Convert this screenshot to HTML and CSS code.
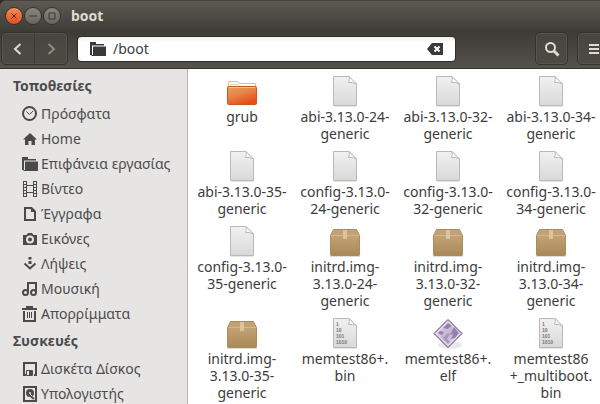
FILE: index.html
```html
<!DOCTYPE html>
<html lang="el">
<head>
    <meta charset="UTF-8">
    <meta name="viewport" content="width=device-width, initial-scale=1.0">
    <title>boot</title>
    <link rel="stylesheet" href="styles.css">
</head>
<body>

<!-- shared file icons -->
<svg class="defs" aria-hidden="true">
    <defs>
        <linearGradient id="paper" x1="0" y1="0" x2="0" y2="1">
            <stop offset="0" stop-color="#f1f1f1"/>
            <stop offset="1" stop-color="#d9d9d9"/>
        </linearGradient>
        <linearGradient id="orange" x1="0" y1="0" x2="0.5" y2="1">
            <stop offset="0" stop-color="#dca668"/>
            <stop offset="0.5" stop-color="#e98246"/>
            <stop offset="1" stop-color="#e2501c"/>
        </linearGradient>
        <linearGradient id="carton" x1="0" y1="0" x2="0" y2="1">
            <stop offset="0" stop-color="#cbaa7d"/>
            <stop offset="1" stop-color="#a98859"/>
        </linearGradient>
        <linearGradient id="gem" x1="0" y1="0" x2="1" y2="1">
            <stop offset="0" stop-color="#e6dfee"/>
            <stop offset="0.5" stop-color="#c5b8d3"/>
            <stop offset="1" stop-color="#ded9e4"/>
        </linearGradient>
    </defs>
    <symbol id="file" viewBox="0 0 32 32">
        <path d="M4.500.5h15.500l7.500 7.500v21.500h-23z" fill="url(#paper)" stroke="#b9b9b9"/>
        <path d="M5 30.500h22.500" stroke="#e4e4e4"/>
        <path d="M20 .5q1 3-.5 6 4-.8 8 1.500z" fill="#fff" stroke="#b9b9b9"/>
    </symbol>
    <symbol id="folder" viewBox="0 0 32 32">
        <path d="M2.500 12V5.500h9l1.500 2h16.500V12z" fill="#fafafa" stroke="#c4c4c4"/>
        <path d="M4 8.500h8" stroke="#e2d6c8"/>
        <rect x="1.500" y="10.500" width="29" height="18" rx="1" fill="url(#orange)" stroke="#c9581f"/>
        <path d="M3 11.500h26" stroke="#f3c091"/>
    </symbol>
    <symbol id="package" viewBox="0 0 32 32">
        <path d="M1 30h30" stroke="#ddd" stroke-width="2"/>
        <path d="M4.500 3.500h23l3 6v19q0 1-1 1h-27q-1 0-1-1v-19z" fill="url(#carton)" stroke="#ab8a5c"/>
        <path d="M5 4h22l2.500 5.500h-27z" fill="#c2a176"/>
        <path d="M2 9.500h28" stroke="#d3b78c"/>
        <path d="M14 4h4v9h-4z" fill="#dac49f"/>
    </symbol>
    <symbol id="elf" viewBox="0 0 32 32">
        <ellipse cx="18" cy="27" rx="12" ry="4" fill="#e9e9e9"/>
        <path d="M16 1.500L30 15.500 16 29.500 2 15.500z" fill="url(#gem)" stroke="#5d3f70"/>
        <path d="M16 3.500L28 15.500 16 27.500 4 15.500z" fill="none" stroke="#f2eff5"/>
        <path d="M16 5l4 3-5 3-4-1zM8 13l4 1-2 3-4-2zM22 9l5 6-4 5-4 1 2-5-3 1z" fill="#9680ae"/>
        <path d="M11 20l5-5 2 1-3 5 3 3-2 2z" fill="#a997bd"/>
    </symbol>
    <symbol id="folder-small" viewBox="0 0 16 16">
        <path d="M0 1h6v2h8v1.500H2V14H0z"/>
        <path d="M3 5.500h13V15H1.500V14H3z"/>
    </symbol>
</svg>

<div class="window">
    <header class="chrome">
        <div class="titlebar">
            <button class="win-btn close" aria-label="Κλείσιμο"><svg viewBox="0 0 16 16"><path d="M5.500 5.500l5 5m0-5l-5 5"/></svg></button>
            <button class="win-btn" aria-label="Ελαχιστοποίηση"><svg viewBox="0 0 16 16"><path d="M4 8h8"/></svg></button>
            <button class="win-btn" aria-label="Μεγιστοποίηση"><svg viewBox="0 0 16 16"><path d="M5 5h6v6H5z"/></svg></button>
            <h1>boot</h1>
        </div>
        <div class="toolbar">
            <div class="nav">
                <button aria-label="Πίσω"><svg viewBox="0 0 16 16"><path d="M10.500 3L5 8l5.500 5"/></svg></button>
                <button class="off" aria-label="Εμπρός"><svg viewBox="0 0 16 16"><path d="M5.500 3L11 8l-5.500 5"/></svg></button>
            </div>
            <div class="path">
                <label for="location" aria-label="Τοποθεσία"><svg class="icon" viewBox="0 0 16 16"><use href="#folder-small"/></svg></label>
                <input type="text" id="location" value="/boot">
                <button aria-label="Καθαρισμός">
                    <svg class="icon" viewBox="0 0 16 16"><path d="M5 2h11v12H5L0 8z"/><path d="M7.500 5.500l5 5m0-5l-5 5" stroke="#fff" stroke-width="2"/></svg>
                </button>
            </div>
            <button class="tool" aria-label="Αναζήτηση"><svg viewBox="0 0 16 16"><circle cx="6.500" cy="6.500" r="4.500"/><path d="M10 10l4.500 4.500" stroke-width="3"/></svg></button>
            <button class="tool menu" aria-label="Μενού"><svg viewBox="0 0 16 16"><path d="M3 4h10M3 8h10M3 12h10"/></svg></button>
        </div>
    </header>

    <div class="content">
        <nav class="sidebar">
            <h2>Τοποθεσίες</h2>
            <ul>
                <li><a href="#"><svg class="icon" viewBox="0 0 16 16"><circle cx="7.500" cy="7.500" r="6.500" class="line"/><path d="M4.500 5.500l3 3L11 5" class="line thin"/></svg>Πρόσφατα</a></li>
                <li><a href="#"><svg class="icon" viewBox="0 0 16 16"><path d="M8 2l7 6.500h-2V14H9.500v-4h-3v4H3V8.500H1z"/></svg>Home</a></li>
                <li><a href="#"><svg class="icon" viewBox="0 0 16 16"><use href="#folder-small"/></svg>Επιφάνεια εργασίας</a></li>
                <li><a href="#"><svg class="icon" viewBox="0 0 16 16"><path d="M1.500 0v16M4.500 0v16M11.500 0v16M14.500 0v16M5 4.500h6M5 11.500h6" class="line thin"/><path d="M3 0v16M13 0v16" class="line holes"/></svg>Βίντεο</a></li>
                <li><a href="#"><svg class="icon" viewBox="0 0 16 16"><path d="M3 2h6.500L13 5.500V14H3z" class="line"/><path d="M9 2v4h4z"/></svg>Έγγραφα</a></li>
                <li><a href="#"><svg class="icon" viewBox="0 0 16 16"><path d="M1 4h3.500L6 2h4l1.500 2H15v10H1z"/><circle cx="8" cy="8.500" r="3" fill="none" stroke="#e6e5e4" stroke-width="2"/></svg>Εικόνες</a></li>
                <li><a href="#"><svg class="icon" viewBox="0 0 16 16"><path d="M6.500 1h3v2.500h-3zM6.500 5h3v3h-3z"/><path d="M2.500 7.500L8 12.500l5.500-5" class="line"/></svg>Λήψεις</a></li>
                <li><a href="#"><svg class="icon" viewBox="0 0 16 16"><circle cx="3.500" cy="11.500" r="2.500" class="line"/><circle cx="11.500" cy="11.500" r="2.500" class="line"/><path d="M6 12V2h8v10" class="line"/></svg>Μουσική</a></li>
                <li><a href="#"><svg class="icon" viewBox="0 0 16 16"><path d="M0 3h15M4 1h7M2 5v10h11V5" class="line"/><path d="M5.500 6v6M7.500 6v6M9.500 6v6" class="line thin"/></svg>Απορρίμματα</a></li>
            </ul>
            <h2>Συσκευές</h2>
            <ul>
                <li><a href="#"><svg class="icon" viewBox="0 0 16 16"><path d="M4 14H2V2h12v12h-2" class="line"/><path d="M4.500 9.500h6v5h-6z" class="line thin"/><path d="M7 10h3v4H7z"/></svg>Δισκέτα Δίσκος</a></li>
                <li><a href="#"><svg class="icon" viewBox="0 0 16 16"><rect x="2" y="1" width="12" height="14" class="line"/><circle cx="8" cy="7" r="4"/><circle cx="8" cy="7" r="1" fill="#e6e5e4"/><path d="M8 8l4 4" stroke="#e6e5e4"/><path d="M9 10.500l3 2.500" class="line"/></svg>Υπολογιστής</a></li>
            </ul>
        </nav>
        <div class="grip"></div>
        <main>
            <ul class="files">
                <li><svg><use href="#folder"/></svg>grub</li>
                <li><svg><use href="#file"/></svg>abi-3.13.0-24-<br>generic</li>
                <li><svg><use href="#file"/></svg>abi-3.13.0-32-<br>generic</li>
                <li><svg><use href="#file"/></svg>abi-3.13.0-34-<br>generic</li>
                <li><svg><use href="#file"/></svg>abi-3.13.0-35-<br>generic</li>
                <li><svg><use href="#file"/></svg>config-3.13.0-<br>24-generic</li>
                <li><svg><use href="#file"/></svg>config-3.13.0-<br>32-generic</li>
                <li><svg><use href="#file"/></svg>config-3.13.0-<br>34-generic</li>
                <li><svg><use href="#file"/></svg>config-3.13.0-<br>35-generic</li>
                <li><svg><use href="#package"/></svg>initrd.img-<br>3.13.0-24-<br>generic</li>
                <li><svg><use href="#package"/></svg>initrd.img-<br>3.13.0-32-<br>generic</li>
                <li><svg><use href="#package"/></svg>initrd.img-<br>3.13.0-34-<br>generic</li>
                <li><svg><use href="#package"/></svg>initrd.img-<br>3.13.0-35-<br>generic</li>
                <li>
                    <svg class="binary"><use href="#file"/><text x="7" y="8">1</text><text x="7" y="14">10</text><text x="7" y="20">101</text><text x="7" y="26">1010</text></svg>
                    memtest86+.<br>bin
                </li>
                <li><svg><use href="#elf"/></svg>memtest86+.<br>elf</li>
                <li>
                    <svg class="binary"><use href="#file"/><text x="7" y="8">1</text><text x="7" y="14">10</text><text x="7" y="20">101</text><text x="7" y="26">1010</text></svg>
                    memtest86<br>+_multiboot.<br>bin
                </li>
            </ul>
        </main>
    </div>
</div>

</body>
</html>
```
FILE: styles.css
```css
* {
    box-sizing: border-box;
}
body {
    margin: 0;
    font-family: "Noto Sans", "Open Sans", sans-serif;
    font-size: 14px;
    color: #3c3c3c;
    background: #2c2b28;
}
ul {
    list-style: none;
    margin: 0;
    padding: 0;
}
button {
    padding: 0;
    border: none;
    background: none;
    display: flex;
    align-items: center;
    justify-content: center;
}
.defs {
    position: absolute;
    width: 0;
    height: 0;
}
.window {
    display: flex;
    flex-direction: column;
    height: 100vh;
    overflow: hidden;
}
.chrome {
    border-radius: 6px 0 0 0;
    background: #3c3b37;
    border-bottom: 1px solid #33322e;
}

/* title bar */
.titlebar {
    display: flex;
    align-items: center;
    gap: 1px;
    height: 31px;
    padding-left: 5px;
    border-top: 1px solid #45443e;
    border-radius: 6px 0 0 0;
    background: linear-gradient(#5c5a50, #3d3c38);
}
.win-btn svg {
    width: 18px;
    height: 18px;
    border: 1px solid #34332f;
    border-radius: 50%;
    background: linear-gradient(#8a877d, #67655d);
    fill: none;
    stroke: #3c3b37;
}
.win-btn.close svg {
    background: linear-gradient(#f58c5d, #e24f1d);
    stroke: #5a2411;
}
h1 {
    margin: 0 0 0 9px;
    font-size: 14px;
    line-height: 18px;
    color: #dfdbd2;
}

/* toolbar */
.toolbar {
    display: flex;
    align-items: center;
    gap: 9px;
    height: 37px;
    padding: 0 0 2px 1px;
    background: linear-gradient(#3c3b37, #55524a);
}
.nav,
.tool {
    height: 33px;
    border: 1px solid #33322d;
    border-radius: 5px;
    background: linear-gradient(#474640, #4d4a43);
    box-shadow: inset 0 0 0 1px #57554d;
}
.nav {
    display: flex;
    width: 67px;
}
.nav button {
    flex: 1;
}
.nav button + button {
    border-left: 1px solid #3b3a35;
}
.toolbar svg {
    width: 16px;
    height: 16px;
}
.nav svg,
.tool svg {
    fill: none;
    stroke: #dfdbd2;
    stroke-width: 2;
}
.nav .off svg {
    stroke: #8c897f;
}
.tool {
    width: 33px;
}
/* the menu button runs past the window edge */
.tool.menu {
    margin-right: -10px;
}
.path {
    flex: 1;
    display: flex;
    align-items: center;
    gap: 7px;
    height: 26px;
    margin-right: 70px;
    padding: 0 12px;
    border: 1px solid #2e2d2a;
    border-radius: 4px;
    background: linear-gradient(#eee, #fff 5px);
}
.path label {
    display: flex;
}
.path input {
    flex: 1;
    min-width: 0;
    padding: 0;
    border: none;
    outline: none;
    background: none;
    font: inherit;
    line-height: 20px;
    color: #3c3c3c;
}
.icon {
    width: 16px;
    height: 16px;
    fill: #4a4a4a;
}
.path .icon {
    fill: #3a3a38;
}

/* places */
.content {
    flex: 1;
    display: flex;
    min-height: 0;
}
.sidebar {
    width: 187px;
    flex-shrink: 0;
    padding-top: 2px;
    overflow: hidden;
    background: #e6e5e4;
}
.sidebar h2 {
    margin: 0;
    padding-left: 13px;
    font-size: 14px;
    line-height: 30px;
    color: #4c4c4c;
}
.sidebar a {
    display: flex;
    align-items: center;
    gap: 3px;
    padding-left: 22px;
    line-height: 25px;
    color: #4c4c4c;
    text-decoration: none;
    white-space: nowrap;
}
.sidebar .line {
    fill: none;
    stroke: #4a4a4a;
    stroke-width: 2;
}
.sidebar .thin {
    stroke-width: 1;
}
.sidebar .holes {
    stroke-dasharray: 1 2;
}
.grip {
    width: 1px;
    background: #b5b3b0;
}

/* files */
main {
    flex: 1;
    padding: 7px 0 0 6px;
    overflow: hidden;
    background: #fff;
}
.files {
    display: grid;
    grid-template-columns: repeat(auto-fill, 96px);
    gap: 9px 7px;
}
.files li {
    text-align: center;
    line-height: 17px;
    white-space: nowrap;
}
.files svg {
    display: block;
    width: 32px;
    height: 32px;
    margin: 0 auto;
}
.binary text {
    font: bold 5px "Liberation Sans", sans-serif;
    fill: #777;
}
```
